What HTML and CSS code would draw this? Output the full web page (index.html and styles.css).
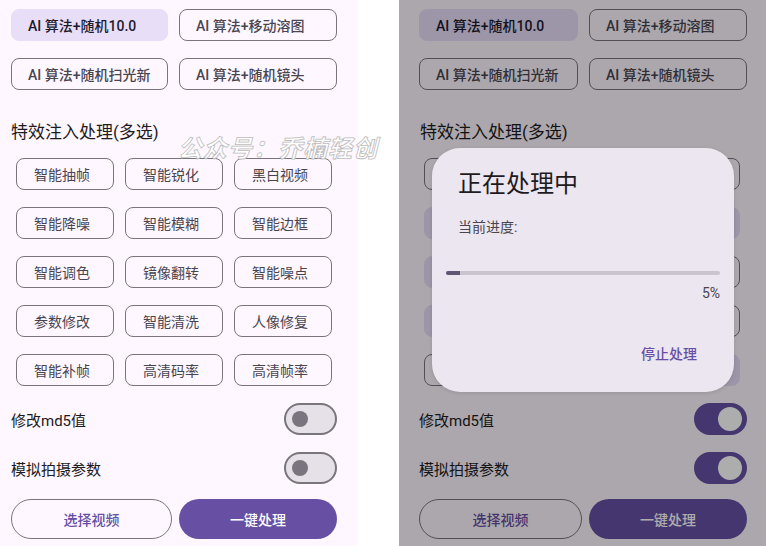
FILE: index.html
```html
<!DOCTYPE html>
<html lang="zh-CN">
<head>
<meta charset="utf-8">
<title>AI 视频处理</title>
<link rel="stylesheet" href="styles.css">
</head>
<body>
<div class="stage">
  <section class="phone phone-left">
    <div class="algo-grid">
      <button class="algo algo-selected">AI 算法+随机10.0</button>
      <button class="algo">AI 算法+移动溶图</button>
      <button class="algo">AI 算法+随机扫光新</button>
      <button class="algo">AI 算法+随机镜头</button>
    </div>
    <h2 class="section-title">特效注入处理(多选)</h2>
    <div class="chip-grid">
      <span class="chip">智能抽帧</span><span class="chip">智能锐化</span><span class="chip">黑白视频</span>
      <span class="chip">智能降噪</span><span class="chip">智能模糊</span><span class="chip">智能边框</span>
      <span class="chip">智能调色</span><span class="chip">镜像翻转</span><span class="chip">智能噪点</span>
      <span class="chip">参数修改</span><span class="chip">智能清洗</span><span class="chip">人像修复</span>
      <span class="chip">智能补帧</span><span class="chip">高清码率</span><span class="chip">高清帧率</span>
    </div>
    <div class="switch-row"><span class="switch-label">修改md5值</span><span class="switch"><span class="thumb"></span></span></div>
    <div class="switch-row"><span class="switch-label">模拟拍摄参数</span><span class="switch"><span class="thumb"></span></span></div>
    <div class="actions">
      <button class="btn btn-outline">选择视频</button>
      <button class="btn btn-filled">一键处理</button>
    </div>
  </section>

  <div class="gap-strip"></div>

  <section class="phone phone-right">
    <div class="algo-grid">
      <button class="algo algo-selected">AI 算法+随机10.0</button>
      <button class="algo">AI 算法+移动溶图</button>
      <button class="algo">AI 算法+随机扫光新</button>
      <button class="algo">AI 算法+随机镜头</button>
    </div>
    <h2 class="section-title">特效注入处理(多选)</h2>
    <div class="chip-grid" aria-hidden="true">
      <span class="chip"></span><span class="chip"></span><span class="chip"></span>
      <span class="chip chip-on"></span><span class="chip"></span><span class="chip chip-on"></span>
      <span class="chip chip-on"></span><span class="chip"></span><span class="chip"></span>
      <span class="chip chip-on"></span><span class="chip"></span><span class="chip"></span>
      <span class="chip"></span><span class="chip"></span><span class="chip chip-on"></span>
    </div>
    <div class="switch-row"><span class="switch-label">修改md5值</span><span class="switch switch-on"><span class="thumb"></span></span></div>
    <div class="switch-row"><span class="switch-label">模拟拍摄参数</span><span class="switch switch-on"><span class="thumb"></span></span></div>
    <div class="actions">
      <button class="btn btn-outline">选择视频</button>
      <button class="btn btn-filled">一键处理</button>
    </div>

    <div class="scrim"></div>
    <div class="dialog">
      <div class="dialog-title">正在处理中</div>
      <div class="dialog-label">当前进度:</div>
      <div class="progress"><div class="progress-bar" style="width: 5%"></div></div>
      <div class="progress-value">5%</div>
      <div class="dialog-actions"><span class="text-btn">停止处理</span></div>
    </div>
  </section>

  <div class="watermark">公众号：乔楠轻创</div>
</div>
</body>
</html>
```

FILE: styles.css
```css
* { box-sizing: border-box; }

html, body {
  margin: 0;
  padding: 0;
  background: #ffffff;
}

body {
  font-family: "Roboto", "Noto Sans CJK SC", sans-serif;
  color: #1d1b20;
}

.stage {
  position: relative;
  display: flex;
  width: 766px;
  height: 546px;
  overflow: hidden;
}

.phone {
  position: relative;
  height: 546px;
  background: #fef7ff;
  padding-top: 9px;
}

.phone-left {
  width: 358px;
  padding-left: 11px;
}

.gap-strip {
  width: 41px;
  background: #ffffff;
}

.phone-right {
  width: 367px;
  padding-left: 20px;
}

/* algorithm buttons */
.algo-grid {
  display: grid;
  grid-template-columns: 157px 158px;
  column-gap: 11px;
  row-gap: 17px;
}

.phone-right .algo-grid {
  grid-template-columns: 159px 158px;
}

.algo {
  height: 32px;
  border: 1px solid #79747e;
  border-radius: 8px;
  background: transparent;
  font-family: inherit;
  font-size: 14px;
  font-weight: 500;
  color: #49454f;
  text-align: left;
  padding: 0 0 0 16px;
  white-space: nowrap;
}

.algo-selected {
  background: #e8def8;
  border-color: #e8def8;
  color: #1d192b;
}

.section-title {
  margin: 30px 0 14px;
  font-size: 17px;
  line-height: 24px;
  font-weight: 400;
  color: #1d1b20;
}

.phone-right .section-title {
  padding-left: 1px;
}

/* effect chips */
.chip-grid {
  display: grid;
  grid-template-columns: repeat(3, 98px);
  column-gap: 11px;
  row-gap: 17px;
  padding-left: 5px;
}

.chip {
  display: flex;
  align-items: center;
  height: 32px;
  border: 1px solid #79747e;
  border-radius: 8px;
  padding-left: 17px;
  font-size: 14px;
  color: #49454f;
  white-space: nowrap;
}

.chip-on {
  background: #e8def8;
  border-color: #e8def8;
}

/* switches */
.switch-row {
  display: flex;
  align-items: center;
  justify-content: space-between;
  width: 326px;
  height: 32px;
  margin-top: 17px;
}

.phone-right .switch-row {
  width: 328px;
}

.switch-label {
  font-size: 15px;
  color: #1d1b20;
}

.switch {
  display: flex;
  align-items: center;
  width: 53px;
  height: 32px;
  border: 2px solid #79747e;
  border-radius: 16px;
  background: #e6e0e9;
  padding-left: 6px;
}

.thumb {
  width: 16px;
  height: 16px;
  border-radius: 50%;
  background: #79747e;
}

.switch-on {
  background: #6750a4;
  border-color: #6750a4;
  justify-content: flex-end;
  padding: 0 3px 0 0;
}

.switch-on .thumb {
  width: 24px;
  height: 24px;
  background: #ffffff;
}

/* bottom actions */
.actions {
  display: flex;
  gap: 7px;
  margin-top: 15px;
}

.btn {
  height: 40px;
  border-radius: 20px;
  font-family: inherit;
  font-size: 14px;
  font-weight: 500;
  padding: 0;
}

.btn-outline {
  width: 161px;
  background: transparent;
  border: 1px solid #79747e;
  color: #6750a4;
}

.phone-right .btn-outline {
  width: 163px;
}

.btn-filled {
  width: 158px;
  background: #6750a4;
  border: none;
  color: #ffffff;
}

/* dialog overlay */
.scrim {
  position: absolute;
  inset: 0;
  background: rgba(0, 0, 0, 0.32);
}

.dialog {
  position: absolute;
  left: 33px;
  top: 148px;
  width: 302px;
  height: 244px;
  border-radius: 28px;
  background: #ece6f0;
  box-shadow: 0 1px 4px rgba(0, 0, 0, 0.12);
  padding: 24px 14px 0 14px;
}

.dialog-title {
  padding-left: 12px;
  font-size: 24px;
  line-height: 24px;
  color: #1d1b20;
}

.dialog-label {
  margin-top: 21px;
  padding-left: 12px;
  font-size: 14px;
  line-height: 20px;
  color: #49454f;
}

.progress {
  margin-top: 34px;
  height: 4px;
  background: #cac4cf;
  border-radius: 2px;
  overflow: hidden;
}

.progress-bar {
  height: 100%;
  background: #5f5575;
}

.progress-value {
  margin-top: 8px;
  text-align: right;
  font-size: 14px;
  line-height: 20px;
  color: #49454f;
}

.dialog-actions {
  display: flex;
  justify-content: flex-end;
  margin-top: 41px;
  padding-right: 23px;
}

.text-btn {
  font-size: 14px;
  line-height: 20px;
  font-weight: 500;
  color: #6750a4;
}

/* watermark */
.watermark {
  position: absolute;
  left: 178px;
  top: 134px;
  font-size: 24px;
  line-height: 30px;
  font-style: italic;
  font-weight: 700;
  color: rgba(255, 255, 255, 0.92);
  -webkit-text-stroke: 0.8px #bdbdbd;
  letter-spacing: 1px;
  pointer-events: none;
}
```
